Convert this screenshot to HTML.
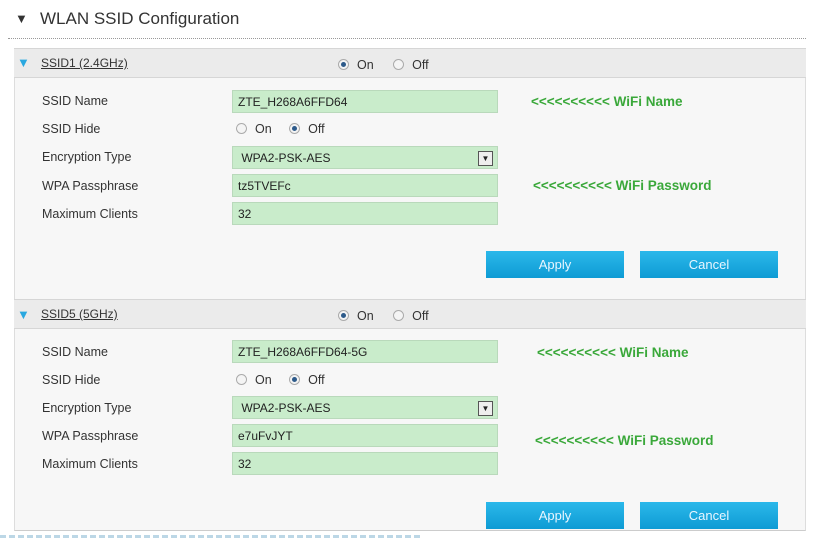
<!DOCTYPE html><html><head><style>
body{margin:0;width:840px;height:538px;background:#fff;font-family:"Liberation Sans",sans-serif;position:relative;overflow:hidden}
.a{position:absolute}
.lbl{font-size:12.5px;color:#333}
.inp{position:absolute;left:232px;height:23px;background:#c9eccb;border:1px solid #b9d9bb;font-size:12px;line-height:23px;padding-left:5px;box-sizing:border-box;width:266px;color:#222}
.hdr{position:absolute;left:14px;width:792px;height:28px;background:#ebebeb;border-top:1px solid #d6d6d6;border-bottom:1px solid #d6d6d6}
.btn{position:absolute;width:138px;height:27px;background:linear-gradient(#2bb8ea,#0e9bd4);color:#e8f6ff;font-size:13px;text-align:center;line-height:27px}
.rad{display:inline-block;width:9px;height:9px;border:1px solid #aaa;border-radius:50%;background:#f4f4f4;vertical-align:-1px;margin-right:8px;position:relative}
.rad.on::after{content:"";position:absolute;left:2px;top:2px;width:5px;height:5px;border-radius:50%;background:#2d5a8a}
.r{font-size:12.5px;color:#333}
.note{font-size:13.5px;font-weight:bold;color:#3aa83a}
</style></head><body>
<div class="a" style="left:15px;top:11px;font-size:13px;color:#333">▼</div>
<div class="a" style="left:40px;top:9px;font-size:17px;color:#333">WLAN SSID Configuration</div>
<div class="a" style="left:8px;top:38px;width:798px;border-top:1px dotted #999"></div>
<div class="a" style="left:14px;top:48px;width:792px;height:483px;background:#f7f7f7;border-left:1px solid #ddd;border-right:1px solid #ddd;border-bottom:1px solid #ccc;box-sizing:border-box"></div>

<div class="hdr" style="top:48px"></div>
<div class="a" style="left:17px;top:55px;font-size:13px;color:#29a8e0">▼</div>
<div class="a" style="left:41px;top:56px;font-size:12px;color:#333;text-decoration:underline">SSID1 (2.4GHz)</div>
<div class="a r" style="left:338px;top:58px"><span class="rad on"></span>On <span class="rad" style="margin-left:16px"></span>Off</div>
<div class="a lbl" style="left:42px;top:94px">SSID Name</div>
<div class="inp" style="top:90px">ZTE_H268A6FFD64</div>
<div class="a note" style="left:531px;top:94px">&lt;&lt;&lt;&lt;&lt;&lt;&lt;&lt;&lt;&lt; WiFi Name</div>
<div class="a lbl" style="left:42px;top:122px">SSID Hide</div>
<div class="a r" style="left:236px;top:122px"><span class="rad"></span>On <span class="rad on" style="margin-left:14px"></span>Off</div>
<div class="a lbl" style="left:42px;top:150px">Encryption Type</div>
<div class="inp" style="top:146px">&nbsp;WPA2-PSK-AES<span style="position:absolute;right:4px;top:4px;width:13px;height:13px;border:1px solid #555;background:#eee;font-size:8px;line-height:13px;text-align:center">▼</span></div>
<div class="a lbl" style="left:42px;top:179px">WPA Passphrase</div>
<div class="inp" style="top:174px">tz5TVEFc</div>
<div class="a note" style="left:533px;top:178px">&lt;&lt;&lt;&lt;&lt;&lt;&lt;&lt;&lt;&lt; WiFi Password</div>
<div class="a lbl" style="left:42px;top:207px">Maximum Clients</div>
<div class="inp" style="top:202px">32</div>
<div class="btn" style="left:486px;top:251px">Apply</div>
<div class="btn" style="left:640px;top:251px">Cancel</div>

<div class="hdr" style="top:299px"></div>
<div class="a" style="left:17px;top:307px;font-size:13px;color:#29a8e0">▼</div>
<div class="a" style="left:41px;top:307px;font-size:12px;color:#333;text-decoration:underline">SSID5 (5GHz)</div>
<div class="a r" style="left:338px;top:309px"><span class="rad on"></span>On <span class="rad" style="margin-left:16px"></span>Off</div>
<div class="a lbl" style="left:42px;top:345px">SSID Name</div>
<div class="inp" style="top:340px">ZTE_H268A6FFD64-5G</div>
<div class="a note" style="left:537px;top:345px">&lt;&lt;&lt;&lt;&lt;&lt;&lt;&lt;&lt;&lt; WiFi Name</div>
<div class="a lbl" style="left:42px;top:373px">SSID Hide</div>
<div class="a r" style="left:236px;top:373px"><span class="rad"></span>On <span class="rad on" style="margin-left:14px"></span>Off</div>
<div class="a lbl" style="left:42px;top:401px">Encryption Type</div>
<div class="inp" style="top:396px">&nbsp;WPA2-PSK-AES<span style="position:absolute;right:4px;top:4px;width:13px;height:13px;border:1px solid #555;background:#eee;font-size:8px;line-height:13px;text-align:center">▼</span></div>
<div class="a lbl" style="left:42px;top:429px">WPA Passphrase</div>
<div class="inp" style="top:424px">e7uFvJYT</div>
<div class="a note" style="left:535px;top:433px">&lt;&lt;&lt;&lt;&lt;&lt;&lt;&lt;&lt;&lt; WiFi Password</div>
<div class="a lbl" style="left:42px;top:457px">Maximum Clients</div>
<div class="inp" style="top:452px">32</div>
<div class="btn" style="left:486px;top:502px">Apply</div>
<div class="btn" style="left:640px;top:502px">Cancel</div>
<div class="a" style="left:0;top:535px;width:420px;border-top:3px dashed #bcd7e6"></div>
</body></html>
